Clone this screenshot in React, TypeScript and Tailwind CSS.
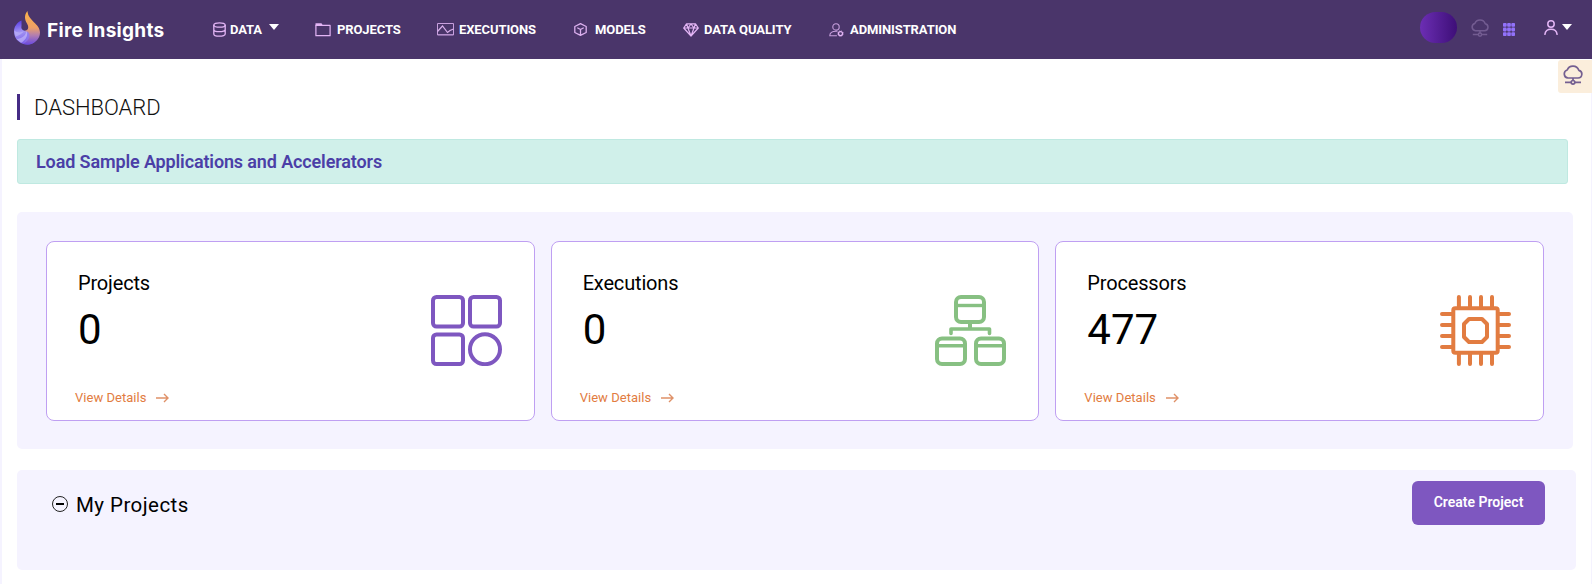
import React from "react";

const roboto = "font-['Roboto',sans-serif]";

function DatabaseIcon() {
  return (
    <svg width="13" height="15" viewBox="0 0 13 15" fill="none" stroke="#e3b5f5" strokeWidth="1.300">
      <ellipse cx="6.500" cy="3" rx="5.700" ry="2.200" />
      <path d="M.8 3v9c0 1.200 2.500 2.200 5.700 2.200s5.700-1 5.700-2.200V3M.8 7.500c0 1.200 2.500 2.200 5.700 2.200s5.700-1 5.700-2.200" />
    </svg>
  );
}

function FolderIcon() {
  return (
    <svg width="16" height="14" viewBox="0 0 16 14" fill="none" stroke="#e3b5f5" strokeWidth="1.200">
      <path d="M.9 2.300h14.200v10.400H.9z" strokeLinejoin="round" />
      <path d="M.5.3h6l1.500 2.500H.5z" fill="#e3b5f5" stroke="none" />
    </svg>
  );
}

function ChartIcon() {
  return (
    <svg width="17" height="13" viewBox="0 0 17 13" fill="none" stroke="#c79fdd" strokeWidth="1">
      <path d="M.5.5h16v11.500H.5z" />
      <path d="M.5 8.500 5.500 3l5 6.500 2.500-2 3.500-1.500" stroke="#d9b0ec" strokeWidth="1.200" />
      <path d="M.5 11.500h16" strokeOpacity=".7" />
    </svg>
  );
}

function CubeIcon() {
  return (
    <svg width="13" height="13" viewBox="0 0 13 13" fill="none" stroke="#dcb0ef" strokeWidth="1.300" strokeLinejoin="round">
      <path d="M6.500.7 12.200 3.500v6L6.500 12.300.8 9.500v-6zM3.300 4.800l3.200 1.700 3.200-1.700M6.500 6.500v5.800" />
    </svg>
  );
}

function DiamondIcon() {
  return (
    <svg width="16" height="14" viewBox="0 0 16 14" fill="none" stroke="#e3b5f5" strokeWidth="1.200" strokeLinejoin="round">
      <path d="M3.500.8h9L15.300 5 8 13 .7 5zM.7 5h14.600M5 5l3 8 3-8M3.500.8 5 5l3-4 3 4 1.500-4.200" />
    </svg>
  );
}

function AdminIcon() {
  return (
    <svg width="15" height="14" viewBox="0 0 15 14" fill="none" stroke="#c79fdd" strokeWidth="1.100">
      <circle cx="7" cy="3.900" r="3.200" />
      <path d="M7.500 12.700H.8c0-3 2.200-4.400 6.200-4.400h1" strokeLinecap="round" />
      <circle cx="11.500" cy="10.600" r="2" stroke="#e3b5f5" strokeWidth="1.200" />
      <circle cx="11.500" cy="10.600" r="2.800" stroke="#e3b5f5" strokeWidth=".7" strokeDasharray="1.100 1.100" />
    </svg>
  );
}

function FlameLogo() {
  return (
    <svg width="26" height="34" viewBox="0 0 26 34">
      <defs>
        <linearGradient id="flame" x1="0" y1="0" x2="0" y2="1">
          <stop offset="0" stopColor="#fbb248" />
          <stop offset=".5" stopColor="#eea067" />
          <stop offset=".72" stopColor="#b47fae" />
          <stop offset="1" stopColor="#6b4ae0" />
        </linearGradient>
        <linearGradient id="swirl" x1=".3" y1="0" x2=".5" y2="1">
          <stop offset="0" stopColor="#5a3ee6" />
          <stop offset=".45" stopColor="#a294f3" />
          <stop offset="1" stopColor="#7759e6" />
        </linearGradient>
      </defs>
      <path d="M7.500 9.500C3 11.500 0 15.500 0 20.500 0 28 6 33.500 13 33.500c5 0 8-2 9-5L14 19.500c-4 1-7.500-1-6.500-4.500z" fill="url(#swirl)" />
      <path d="M13.500 0C10 4 10.500 8.500 13 12.500c2.500 4 1 7-2.500 7.500 6 .5 6 7-1.500 12.800C17.500 35.500 26 29.500 26 21.500 26 12.500 14 10 13.500 0z" fill="url(#flame)" />
      <path d="M.2 19.500c3 2.500 7 2.500 9.800.5-1.500 2.500-4.500 4.500-8.500 5.500z" fill="#c2baf9" fillOpacity=".55" />
      <path d="M2.500 28c5.500-.5 9.500-3.500 10-8 2 4-.5 9-5.500 11.800z" fill="#c9c2fb" fillOpacity=".6" />
      <path d="M13 20c5 3.500 2.500 10-4 12.800 3.500-3.300 5.500-7.800 4-12.800z" fill="#8d79ef" fillOpacity=".7" />
    </svg>
  );
}

function CloudIcon({ size, color }: { size: number; color: string }) {
  return (
    <svg width={size} height={size} viewBox="0 0 20 20" fill="none" stroke={color} strokeWidth="1.700">
      <path d="M5 13a4.100 4.100 0 0 1-.8-8A6.200 6.200 0 0 1 15.800 5.300 3.900 3.900 0 0 1 15 13zM10 13v2.500M2 17.300h6.200M11.800 17.300H18" strokeLinejoin="round" />
      <circle cx="10" cy="17.300" r="1.800" />
    </svg>
  );
}

function Caret({ className = "" }: { className?: string }) {
  return (
    <svg className={className} width="10" height="6" viewBox="0 0 10 6" fill="#fff">
      <path d="M0 0h10L5 6z" />
    </svg>
  );
}

function GridIcon() {
  return (
    <svg width="12" height="13" viewBox="0 0 12 13" fill="#9272fa">
      {[0, 4.600, 9.200].map((y) => [0, 4.200, 8.400].map((x) => <rect key={`${x}-${y}`} x={x} y={y} width="3.600" height="3.800" rx=".8" />))}
      <path d="M2 1.500h8v.8H2zM2 6h8v.8H2zM2 10.500h8v.8H2z" fillOpacity=".7" />
    </svg>
  );
}

function UserIcon() {
  return (
    <svg width="14" height="15" viewBox="0 0 14 15" fill="none" stroke="#e3b5f5" strokeWidth="1.500">
      <circle cx="7" cy="4" r="3.200" />
      <path d="M.9 14.300C1.300 11 3.500 9.200 7 9.200s5.700 1.800 6.100 5.100" strokeLinecap="round" />
    </svg>
  );
}

function ProjectsArt() {
  return (
    <svg width="71" height="71" viewBox="0 0 71 71" fill="none" stroke="#7e57c0" strokeWidth="4">
      <rect x="2" y="2" width="30" height="29.500" rx="3.500" />
      <rect x="39" y="2" width="30" height="29.500" rx="3.500" />
      <rect x="2" y="39.500" width="30" height="29.500" rx="3.500" />
      <circle cx="54" cy="54.200" r="15" />
    </svg>
  );
}

function ExecutionsArt() {
  return (
    <svg width="71" height="71" viewBox="0 0 71 71" fill="none" stroke="#87c082" strokeWidth="4">
      <rect x="21" y="2" width="28" height="25" rx="5" />
      <path d="M21 10.500h28" strokeWidth="3.400" />
      <path d="M35 27v7" />
      <path d="M16 38.500v-4.500h38.500v4.500" strokeWidth="3.600" strokeLinecap="round" strokeLinejoin="round" />
      <rect x="2" y="43.500" width="28" height="25.500" rx="5" />
      <path d="M2 50.800h28M41 50.800h28" strokeWidth="3.400" />
      <rect x="41" y="43.500" width="28" height="25.500" rx="5" />
    </svg>
  );
}

function ProcessorsArt() {
  return (
    <svg width="71" height="71" viewBox="0 0 71 71" fill="none" stroke="#e27c41" strokeWidth="4" strokeLinecap="round" strokeLinejoin="round">
      <rect x="13.300" y="13.300" width="44.400" height="44.400" rx="2" />
      <path d="M29 24h13l5 5v13l-5 5H29l-5-5V29z" />
      <path d="M18.900 2v11M30 2v11M41 2v11M52 2v11M18.900 58v11M30 58v11M41 58v11M52 58v11M2 18.900h11M2 30h11M2 41h11M2 52h11M58 18.900h11M58 30h11M58 41h11M58 52h11" />
    </svg>
  );
}

const nav = [
  { label: "DATA", icon: <DatabaseIcon />, item: "w-[102px]", slot: "w-[17px]", caret: true },
  { label: "PROJECTS", icon: <FolderIcon />, item: "w-[122px]", slot: "w-[22px]" },
  { label: "EXECUTIONS", icon: <ChartIcon />, item: "w-[137px]", slot: "w-[22px]" },
  { label: "MODELS", icon: <CubeIcon />, item: "w-[109px]", slot: "w-[21px]" },
  { label: "DATA QUALITY", icon: <DiamondIcon />, item: "w-[146px]", slot: "w-[21px]" },
  { label: "ADMINISTRATION", icon: <AdminIcon />, item: "w-[130px]", slot: "w-[21px]" },
];

const cards = [
  { title: "Projects", value: "0", art: <ProjectsArt /> },
  { title: "Executions", value: "0", art: <ExecutionsArt /> },
  { title: "Processors", value: "477", art: <ProcessorsArt /> },
];

export default function App() {
  return (
    <div className={`h-[584px] w-[1592px] overflow-hidden bg-white text-black ${roboto}`}>
      <header className="flex h-[59px] items-center bg-[#4a356a] text-white">
        <div className="flex w-[213px] items-center pt-px pb-[4px] pl-[14px]">
          <FlameLogo />
          <span className="mt-[4px] ml-[7px] whitespace-nowrap font-['Inter',sans-serif] text-[19px] leading-none font-bold tracking-[.3px]">
            Fire Insights
          </span>
        </div>
        <nav className="flex">
          {nav.map((n) => (
            <a key={n.label} className={`flex shrink-0 items-center whitespace-nowrap ${n.item}`}>
              <span className={`shrink-0 ${n.slot}`}>{n.icon}</span>
              <span className="mt-px text-[13px] leading-[18px] font-bold tracking-[-.1px]">{n.label}</span>
              {n.caret && <Caret className="mb-[5px] ml-[7px]" />}
            </a>
          ))}
        </nav>
        <div className="ml-auto flex items-center pr-5">
          <div className="mb-1 h-[31px] w-[37px] rounded-[16px] bg-linear-to-r from-[#6c2eb4] to-[#3e0e78]" />
          <span className="mb-[4px] ml-[14px]"><CloudIcon size={18} color="#735c91" /></span>
          <span className="mb-px ml-[14px]"><GridIcon /></span>
          <span className="mb-[4px] ml-[29px]"><UserIcon /></span>
          <Caret className="mb-[5px] ml-[4px]" />
        </div>
      </header>

      <main className="relative h-[525px] border-r border-l-2 border-solid border-[#f5f3ff] pl-[15px]">
        <div className="absolute top-px -right-px flex h-[33px] w-[34px] items-start rounded-l-[3px] bg-[#fbeedc] pt-[5px] pl-[5px]">
          <CloudIcon size={20} color="#745f91" />
        </div>
        <div className="pt-[35px]">
          <h1 className="h-[26px] border-l-3 border-[#452b85] pl-[14px] text-[22px] leading-[27px] font-[350] tracking-[-.02px] text-[#111]">DASHBOARD</h1>
        </div>
        <div className="mt-[19px] flex h-[45px] w-[1551px] items-center rounded-[3px] border border-[#bfe9e1] bg-[#d0f0ea] pl-[18px] text-[18px] font-semibold tracking-[-.13px] text-[#4b3fa7]">
          Load Sample Applications and Accelerators
        </div>

        <section className="mt-7 flex h-[237px] w-[1556px] gap-4 rounded-[5px] bg-[#f5f3ff] p-[29px] pb-7">
          {cards.map((c) => (
            <article key={c.title} className="flex h-[180px] flex-1 justify-between rounded-[8px] border border-[#bf9ff2] bg-white pr-8">
              <div className="flex flex-col">
                <h2 className="mt-[28px] pl-[31px] text-[20px] leading-[26px] tracking-[-.17px]">{c.title}</h2>
                <div className="mt-[6px] pl-[31px] text-[42px] leading-[56px]">{c.value}</div>
                <a className="mt-[30px] flex items-center pl-[28px] text-[13px] leading-5 tracking-[.03px] text-[#e27c41]">
                  View Details
                  <svg className="ml-[10px]" width="13" height="10" viewBox="0 0 13 10" fill="none" stroke="#df9168" strokeWidth="1.400">
                    <path d="M0 5h12M8 1l4 4-4 4" />
                  </svg>
                </a>
              </div>
              <div className="mt-[53px]">{c.art}</div>
            </article>
          ))}
        </section>

        <section className="mt-[21px] flex h-[100px] w-[1559px] items-start rounded-[5px] bg-[#f5f3ff] pr-[31px] pl-[35px]">
          <svg className="mt-[26px]" width="16" height="16" viewBox="0 0 16 16" fill="none" stroke="#222">
            <circle cx="8" cy="8" r="7.500" strokeWidth="1" />
            <path d="M4 8h8" stroke="#000" strokeWidth="2" />
          </svg>
          <h2 className="mt-[21px] ml-[8px] text-[20.500px] leading-[28px] tracking-[.45px]">My Projects</h2>
          <button className="mt-[11px] ml-auto h-11 w-[133px] rounded-[6px] bg-[#7e57c0] pb-[2px] text-[14px] font-semibold text-white">
            Create Project
          </button>
        </section>
      </main>
    </div>
  );
}
